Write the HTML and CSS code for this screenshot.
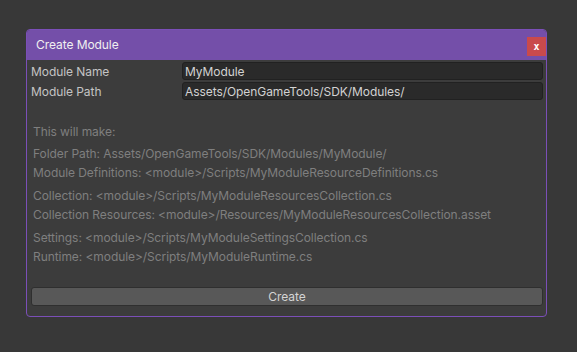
FILE: index.html
```html
<!DOCTYPE html>
<html lang="en">
<head>
    <meta charset="UTF-8">
    <meta name="viewport" content="width=device-width, initial-scale=1.0">
    <title>Create Module</title>
    <link rel="stylesheet" href="styles.css">
</head>
<body>
    <div class="dialog">
        <div class="title-bar">
            <span class="title">Create Module</span>
            <button class="close-btn">x</button>
        </div>

        <div class="content">
            <div class="field">
                <label for="module-name">Module Name</label>
                <input type="text" id="module-name" value="MyModule">
            </div>
            <div class="field">
                <label for="module-path">Module Path</label>
                <input type="text" id="module-path" value="Assets/OpenGameTools/SDK/Modules/">
            </div>

            <div class="info">
                <p class="info-head">This will make:</p>
                <div class="group">
                    <p>Folder Path: Assets/OpenGameTools/SDK/Modules/MyModule/</p>
                    <p>Module Definitions: &lt;module&gt;/Scripts/MyModuleResourceDefinitions.cs</p>
                </div>
                <div class="group">
                    <p>Collection: &lt;module&gt;/Scripts/MyModuleResourcesCollection.cs</p>
                    <p>Collection Resources: &lt;module&gt;/Resources/MyModuleResourcesCollection.asset</p>
                </div>
                <div class="group">
                    <p>Settings: &lt;module&gt;/Scripts/MyModuleSettingsCollection.cs</p>
                    <p>Runtime: &lt;module&gt;/Scripts/MyModuleRuntime.cs</p>
                </div>
            </div>

            <button class="create-btn">Create</button>
        </div>
    </div>
</body>
</html>
```

FILE: styles.css
```css
body {
    font-family: Inter, "Noto Sans", sans-serif;
    font-size: 12px;
    letter-spacing: -0.07px;
    margin: 0;
    background-color: #383838;
    color: #c4c4c4;
}
.dialog {
    margin: 29px 0 0 26px;
    width: 521px;
    height: 288px;
    box-sizing: border-box;
    border: 1px solid #7b4fb8;
    border-radius: 4px;
    background-color: #3c3c3c;
    display: flex;
    flex-direction: column;
    overflow: hidden;
}
.title-bar {
    height: 30px;
    background-color: #744fa9;
    display: flex;
    justify-content: space-between;
    align-items: flex-end;
    padding: 0 0 4px 9px;
    box-sizing: border-box;
    flex-shrink: 0;
}
.title {
    color: #f0f0f0;
    align-self: center;
    margin-top: 3px;
}
.close-btn {
    width: 19px;
    height: 19px;
    padding: 0;
    border: none;
    background-color: #c94a4c;
    color: #fff;
    font-family: "DejaVu Sans Mono", monospace;
    font-weight: bold;
    font-size: 10px;
    line-height: 19px;
}
.content {
    flex: 1;
    display: flex;
    flex-direction: column;
    padding: 2px 3px 10px 4px;
}
.field {
    display: flex;
    align-items: center;
    height: 18px;
    margin-bottom: 2px;
}
.field label {
    width: 151px;
    flex-shrink: 0;
}
.field input {
    flex: 1;
    height: 18px;
    box-sizing: border-box;
    border: 1px solid #212121;
    border-radius: 3px;
    background-color: #2a2a2a;
    color: #d2d2d2;
    font-family: inherit;
    font-size: 12px;
    letter-spacing: inherit;
    padding: 0 2px;
}
.info {
    flex: 1;
    padding: 20px 0 0 2px;
    color: #7f7f7f;
}
.info p {
    margin: 0;
    line-height: 19px;
}
.info-head {
    margin-bottom: 3px !important;
}
.group {
    margin-bottom: 4px;
}
.create-btn {
    height: 19px;
    border: 1px solid #2f2f2f;
    border-radius: 3px;
    background-color: #585858;
    color: #d4d4d4;
    font-family: inherit;
    font-size: 12px;
    letter-spacing: inherit;
    padding: 0;
}
```
